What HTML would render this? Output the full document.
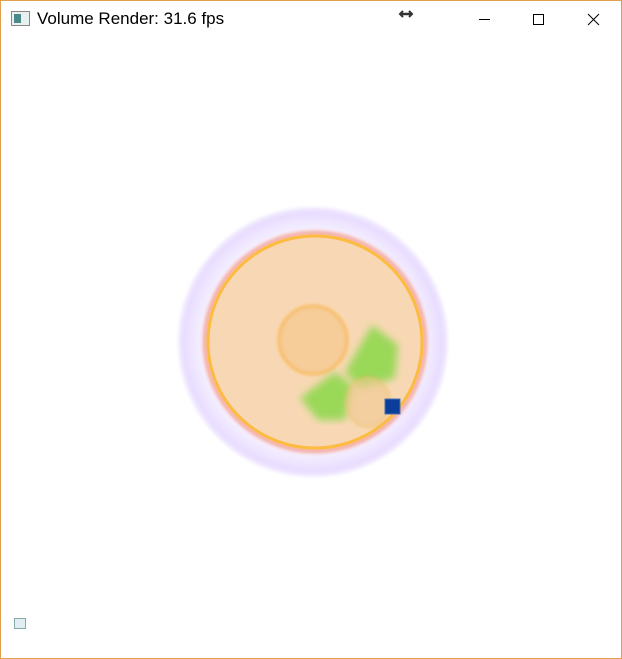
<!DOCTYPE html>
<html><head><meta charset="utf-8"><style>
html,body{margin:0;padding:0;background:#fff;}
#w{position:relative;width:620px;height:657px;border:1px solid #e0a050;background:#fff;overflow:hidden;}
#t{position:absolute;left:36px;top:8px;font:17px "Liberation Sans",sans-serif;color:#000;}
</style></head><body><div id="w">
<svg width="20" height="16" style="position:absolute;left:10px;top:10px"><rect x="0.5" y="0.5" width="18" height="14" fill="#e8f0f0" stroke="#888"/><rect x="3" y="3" width="7" height="9" fill="#4a8a8a"/></svg>
<div id="t">Volume Render: 31.6 fps</div>
<svg width="622" height="40" style="position:absolute;left:0;top:0">
<path d="M399 13h12" stroke="#333" stroke-width="2.5"/><path d="M402 10l-3 3 3 3M408 10l3 3-3 3" stroke="#333" stroke-width="2" fill="none"/>
<path d="M478 18.5h11" stroke="#000"/>
<rect x="532.5" y="13.5" width="10" height="10" fill="none" stroke="#000"/>
<path d="M587 13l11 11M598 13l-11 11" stroke="#000"/>
</svg>
<svg width="622" height="659" style="position:absolute;left:-1px;top:-1px">
<defs>
<filter id="b"><feGaussianBlur stdDeviation="1.5"/></filter>
<filter id="b2"><feGaussianBlur stdDeviation="4"/></filter>
<radialGradient id="g" cx="0.5" cy="0.5" r="0.5"><stop offset="0.8" stop-color="#f8f4ff"/><stop offset="0.96" stop-color="#e8dcff"/><stop offset="1" stop-color="#f4eeff"/></radialGradient>
</defs>
<circle cx="313" cy="342" r="135" fill="url(#g)" filter="url(#b)"/>
<ellipse cx="315" cy="342" rx="110" ry="109" fill="#f8d8b4" stroke="#f5b0a8" stroke-width="5" filter="url(#b)"/>
<ellipse cx="315" cy="342" rx="107" ry="106" fill="none" stroke="#fcbc40" stroke-width="3"/>
<circle cx="313" cy="340" r="34" fill="#f6cc98" stroke="#f8bc60" stroke-width="3" filter="url(#b)"/>
<path d="M372 325 L398 345 L395 378 L360 388 L345 372Z" fill="#90d850" opacity="0.9" filter="url(#b2)"/>
<path d="M300 398 L335 372 L352 385 L345 420 L318 420Z" fill="#90d850" opacity="0.9" filter="url(#b2)"/>
<ellipse cx="368" cy="402" rx="22" ry="25" fill="#f0c890" opacity="0.6" stroke="#e8c060" stroke-width="2" filter="url(#b)"/>
<rect x="385" y="399" width="15" height="15" fill="#0a3e9a" stroke="#4a70b0"/>
</svg>
<svg width="14" height="12" style="position:absolute;left:13px;top:617px"><rect x="0.5" y="0.5" width="11" height="10" fill="#e0eef4" stroke="#8aa"/></svg>
</div></body></html>
